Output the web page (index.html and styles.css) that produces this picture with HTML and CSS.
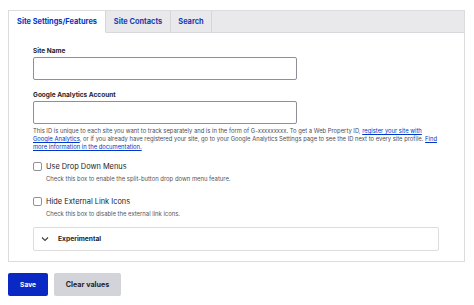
FILE: index.html
```html
<!DOCTYPE html>
<html>
<head>
<meta charset="utf-8">
<link rel="stylesheet" href="styles.css">
</head>
<body>
<div class="page">
  <div class="panel">
    <div class="tabs">
      <div class="tab active">Site Settings/Features</div>
      <div class="tab">Site Contacts</div>
      <div class="tab">Search</div>
      <div class="tab-fill"></div>
    </div>
    <div class="content">
      <div class="field">
        <label class="label">Site Name</label>
        <div class="input"></div>
      </div>
      <div class="field">
        <label class="label">Google Analytics Account</label>
        <div class="input"></div>
        <p class="help">This ID is unique to each site you want to track separately and is in the form of G-xxxxxxxxx. To get a Web Property ID, <a href="#">register your site with<br>Google Analytics</a>, or if you already have registered your site, go to your Google Analytics Settings page to see the ID next to every site profile. <a href="#">Find<br>more information in the documentation.</a></p>
      </div>
      <div class="check">
        <div class="check-row"><span class="box"></span><span class="check-label">Use Drop Down Menus</span></div>
        <p class="check-help">Check this box to enable the split-button drop down menu feature.</p>
      </div>
      <div class="check second">
        <div class="check-row"><span class="box"></span><span class="check-label">Hide External Link Icons</span></div>
        <p class="check-help">Check this box to disable the external link icons.</p>
      </div>
      <div class="details">
        <svg class="chev" width="8" height="6" viewBox="0 0 8 6"><path d="M1 1.5 L4 4.5 L7 1.5" fill="none" stroke="#3b3c44" stroke-width="1.1"/></svg>
        <span class="details-title">Experimental</span>
      </div>
    </div>
  </div>
  <div class="actions">
    <button class="btn primary">Save</button>
    <button class="btn secondary">Clear values</button>
  </div>
</div>
</body>
</html>
```

FILE: styles.css
```css
* { box-sizing: border-box; }
html, body { margin: 0; padding: 0; background: #fff; }
body { font-family: Inter, "Noto Sans", sans-serif; color: #222330; }
.page { padding: 10px 10px 0 8px; }
.panel { border: 1px solid #dcdcdf; width: 457px; }
.tabs { display: flex; height: 22px; background: #e9e9eb; border-bottom: 1px solid #d8d8dc; }
.tab { display: flex; align-items: center; justify-content: center; white-space: nowrap; padding: 0; font-size: 7.4px; font-weight: 700; color: #1b3ab0; border-right: 1px solid #d6d6da; }
.tab:nth-child(1) { width: 97px; }
.tab:nth-child(2) { width: 65px; }
.tab:nth-child(3) { width: 41px; }
.tab.active { background: #fff; color: #0036c9; height: 22px; border-bottom: 1px solid #fff; }
.tab-fill { flex: 1; }
.content { padding: 14px 24px 10px 24px; }
.field { margin-bottom: 11px; }
.label { display: block; font-size: 6.5px; line-height: 8px; font-weight: 700; margin-bottom: 2px; color: #232429; }
.input { width: 264px; height: 23px; border: 1px solid #8f8f97; border-radius: 2px; background: #fff; }
.help { margin: 3px 0 0; font-size: 5.85px; line-height: 8px; color: #4d4e55; white-space: nowrap; }
.help a { color: #0036c9; }
.check { margin-top: 11px; }
.check.second { margin-top: 14px; }
.check-row { display: flex; align-items: center; }
.box { width: 9px; height: 9px; border: 1px solid #909098; border-radius: 2px; margin-right: 4px; }
.check-label { font-size: 7.4px; color: #232429; }
.check-help { margin: 4px 0 0 13px; font-size: 5.9px; line-height: 8px; color: #55565c; }
.details { margin-top: 9px; width: 406px; height: 24px; border: 1px solid #dcdcdf; border-radius: 2px; display: flex; align-items: center; padding-left: 7px; }
.chev { margin-right: 9px; }
.details-title { font-size: 6.7px; font-weight: 700; color: #232429; }
.actions { display: flex; gap: 6px; margin-top: 11px; }
.btn { border: 0; border-radius: 2px; height: 23px; font-family: Inter, "Noto Sans", sans-serif; font-size: 7px; font-weight: 700; padding: 0; }
.primary { background: #0a28c4; color: #fff; width: 40px; font-size: 6.6px; }
.secondary { background: #d3d4d9; color: #232429; width: 67px; font-size: 7.2px; }
```
